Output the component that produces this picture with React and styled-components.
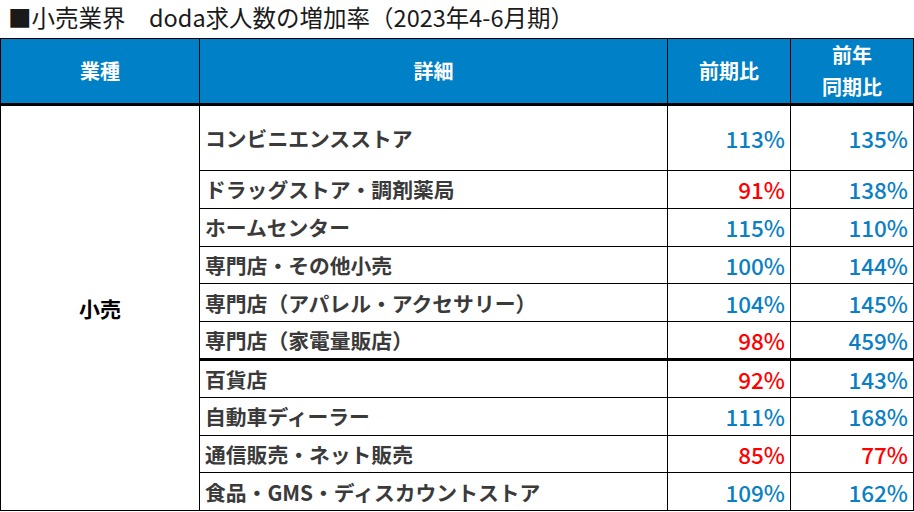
import React from "react";
import styled, { createGlobalStyle } from "styled-components";

const GlobalStyle = createGlobalStyle`
    html, body {
        margin: 0;
        padding: 0;
        background: #ffffff;
    }
    body {
        font-family: "Noto Sans CJK JP", "Noto Sans", sans-serif;
    }
`;

const rows = [
    { name: "コンビニエンスストア", prev: 113, year: 135, tall: true },
    { name: "ドラッグストア・調剤薬局", prev: 91, year: 138 },
    { name: "ホームセンター", prev: 115, year: 110 },
    { name: "専門店・その他小売", prev: 100, year: 144 },
    { name: "専門店（アパレル・アクセサリー）", prev: 104, year: 145 },
    { name: "専門店（家電量販店）", prev: 98, year: 459 },
    { name: "百貨店", prev: 92, year: 143, thick: true },
    { name: "自動車ディーラー", prev: 111, year: 168 },
    { name: "通信販売・ネット販売", prev: 85, year: 77 },
    { name: "食品・GMS・ディスカウントストア", prev: 109, year: 162 },
];

const App = () => {
    return (
        <Wrapper>
            <GlobalStyle />
            <Title>■小売業界　doda求人数の増加率（2023年4-6月期）</Title>
            <Table>
                <colgroup>
                    <col style={{ width: 199 }} />
                    <col style={{ width: 468 }} />
                    <col style={{ width: 123 }} />
                    <col style={{ width: 123 }} />
                </colgroup>
                <thead>
                    <tr>
                        <HeadCell>業種</HeadCell>
                        <HeadCell>詳細</HeadCell>
                        <HeadCell>前期比</HeadCell>
                        <HeadCell>
                            前年
                            <br />
                            同期比
                        </HeadCell>
                    </tr>
                </thead>
                <tbody>
                    {rows.map((row, i) => (
                        <Row key={row.name} $tall={row.tall}>
                            {i === 0 && (
                                <GroupCell rowSpan={rows.length}>小売</GroupCell>
                            )}
                            <NameCell $thick={row.thick}>{row.name}</NameCell>
                            <NumCell $thick={row.thick} $down={row.prev < 100}>
                                {row.prev}%
                            </NumCell>
                            <NumCell $thick={row.thick} $down={row.year < 100}>
                                {row.year}%
                            </NumCell>
                        </Row>
                    ))}
                </tbody>
            </Table>
        </Wrapper>
    );
};

export default App;

const Wrapper = styled.div`
    width: 914px;
    height: 512px;
    overflow: hidden;
`;

const Title = styled.div`
    height: 38px;
    padding-left: 8px;
    font-size: 23.5px;
    line-height: 35px;
    color: #1a1a1a;
    white-space: nowrap;
`;

const Table = styled.table`
    width: 913px;
    border-collapse: collapse;
    table-layout: fixed;
    border: 1px solid #000;
`;

const HeadCell = styled.th`
    height: 63px;
    padding: 0;
    background: #0080c6;
    color: #ffffff;
    font-size: 20px;
    font-weight: 700;
    line-height: 32px;
    text-align: center;
    border: 1px solid #000;
    border-bottom: 3px solid #000;
`;

const Row = styled.tr`
    height: ${(p) => (p.$tall ? "66px" : "37.8px")};
`;

const GroupCell = styled.td`
    padding: 0;
    text-align: center;
    vertical-align: middle;
    font-size: 21px;
    font-weight: 700;
    color: #000;
    border: 1px solid #000;
`;

const NameCell = styled.td`
    padding: 0 0 0 5px;
    font-size: 20.8px;
    font-weight: 700;
    color: #3a3a3a;
    white-space: nowrap;
    border: 1px solid #000;
    border-top: ${(p) => (p.$thick ? "3px" : "1px")} solid #000;
`;

const NumCell = styled.td`
    padding: 0 5px 0 0;
    text-align: right;
    font-size: 22.5px;
    font-weight: 500;
    color: ${(p) => (p.$down ? "#ff0000" : "#0b7fc4")};
    border: 1px solid #000;
    border-top: ${(p) => (p.$thick ? "3px" : "1px")} solid #000;
`;
